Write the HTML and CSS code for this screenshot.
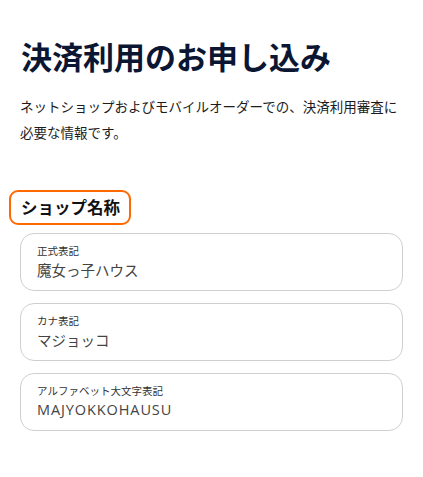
FILE: index.html
```html
<!DOCTYPE html>
<html lang="ja">
<head>
<meta charset="utf-8">
<link rel="stylesheet" href="styles.css">
</head>
<body>
<main class="page">
  <h1 class="title">決済利用のお申し込み</h1>
  <p class="lead">ネットショップおよびモバイルオーダーでの、決済利用審査に必要な情報です。</p>
  <section class="group">
    <h2 class="group-label">ショップ名称</h2>
    <div class="fields">
      <div class="field">
        <span class="field-label">正式表記</span>
        <span class="field-value">魔女っ子ハウス</span>
      </div>
      <div class="field">
        <span class="field-label">カナ表記</span>
        <span class="field-value">マジョッコ</span>
      </div>
      <div class="field">
        <span class="field-label">アルファベット大文字表記</span>
        <span class="field-value field-value-latin">MAJYOKKOHAUSU</span>
      </div>
    </div>
  </section>
</main>
</body>
</html>
```

FILE: styles.css
```css
* { box-sizing: border-box; }
html, body { margin: 0; padding: 0; background: #fff; }
body {
  font-family: "Noto Sans CJK JP", "Noto Sans", sans-serif;
  color: #1a1a1a;
}
.page {
  width: 423px;
  padding: 34px 20px 0 20px;
}
.title {
  margin: 0 0 0 1px;
  font-size: 31px;
  line-height: 44px;
  font-weight: 700;
  color: #0b1633;
}
.lead {
  margin: 15px 0 0 0;
  font-size: 13.5px;
  line-height: 26px;
  color: #1c1c1c;
  width: 385px;
}
.group {
  margin-top: 45px;
}
.group-label {
  display: inline-block;
  margin: 0 0 0 -11px;
  padding: 2px 9px 3px 10px;
  border: 2.5px solid #ff6a00;
  border-radius: 9px;
  font-size: 16.5px;
  line-height: 26px;
  font-weight: 700;
  color: #111;
}
.fields {
  margin-top: 8px;
  display: flex;
  flex-direction: column;
  gap: 12px;
}
.field {
  width: 383px;
  height: 58px;
  border: 1px solid #cfcfcf;
  border-radius: 14px;
  padding: 9px 16px 0 16px;
  display: flex;
  flex-direction: column;
}
.field-label {
  font-size: 10.5px;
  line-height: 16px;
  color: #333;
}
.field-value {
  font-size: 14.5px;
  line-height: 22px;
  color: #444;
}
.field-value-latin {
  font-family: "Open Sans", "Noto Sans CJK JP", sans-serif;
  letter-spacing: 0.9px;
}
```
